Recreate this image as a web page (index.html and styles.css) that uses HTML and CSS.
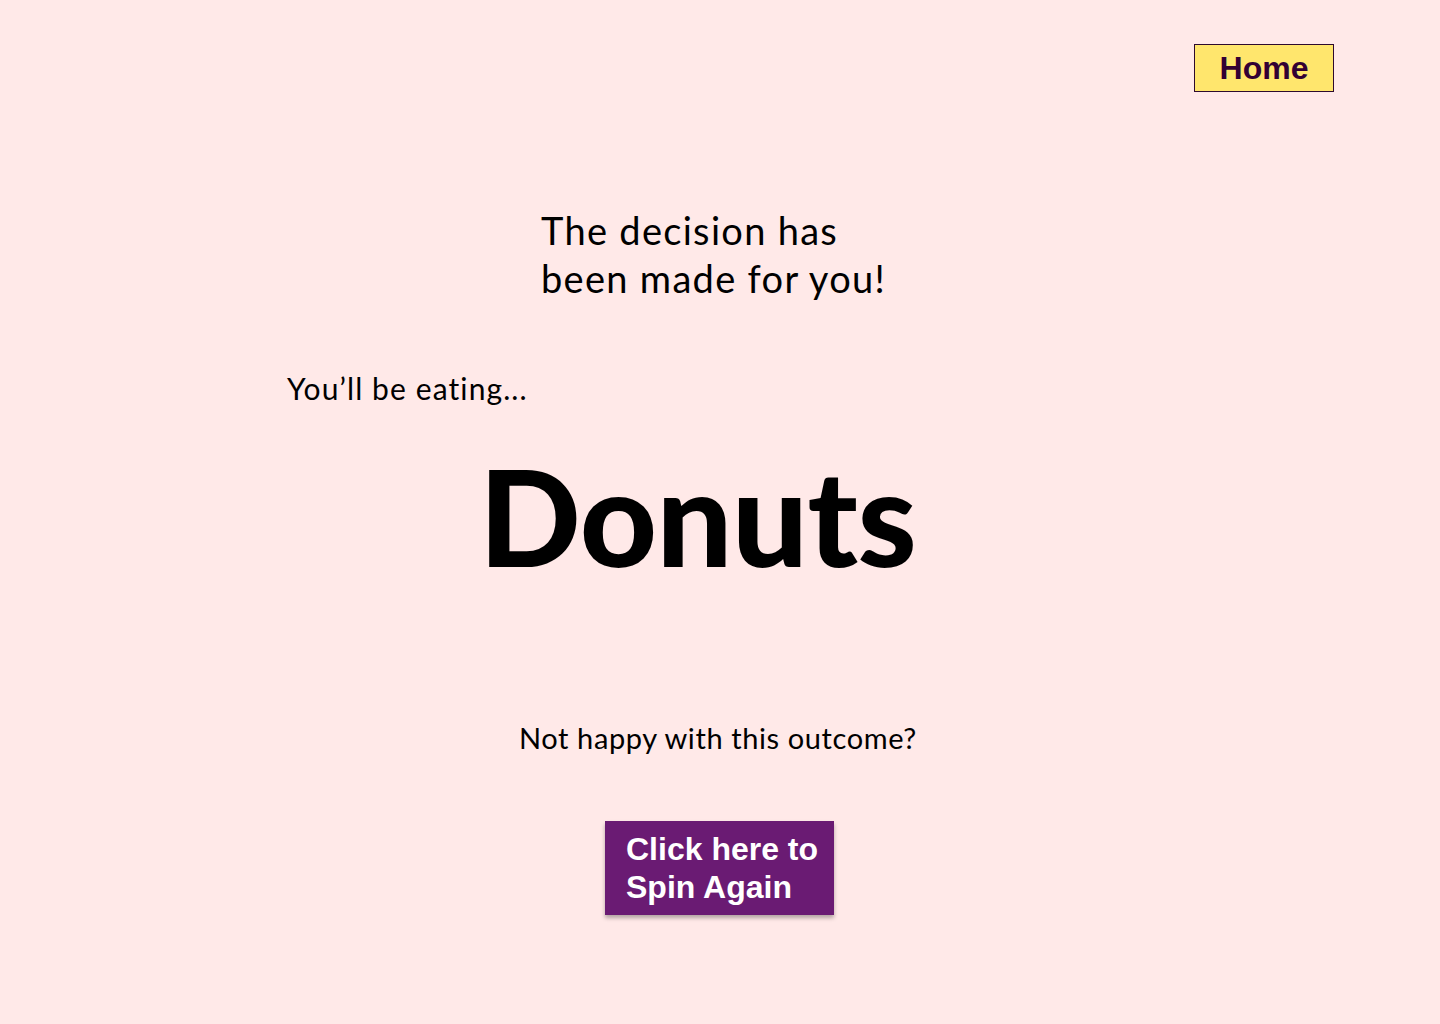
FILE: index.html
```html
<!DOCTYPE html>
<html lang="en">
<head>
<meta charset="utf-8">
<title>Decision</title>
<link rel="stylesheet" href="styles.css">
</head>
<body>
<header class="topbar">
  <a class="home-btn" href="#">Home</a>
</header>
<main class="result">
  <h1 class="decision">The decision has<br>been made for you!</h1>
  <p class="eating">You’ll be eating...</p>
  <h2 class="food">Donuts</h2>
  <p class="unhappy">Not happy with this outcome?</p>
  <a class="spin-btn" href="#">Click here to<br>Spin Again</a>
</main>
</body>
</html>
```
FILE: styles.css
```css
html, body {
  margin: 0;
  padding: 0;
}
body {
  background: #ffe9e8;
  width: 1440px;
  height: 1024px;
  overflow: hidden;
  font-family: "Lato", "Noto Sans", sans-serif;
  color: #000;
}
.topbar {
  display: flex;
  justify-content: flex-end;
  padding: 44px 106px 0 0;
}
.home-btn {
  display: flex;
  align-items: center;
  justify-content: center;
  width: 138px;
  height: 46px;
  background: #ffe66d;
  border: 1px solid #2d0a2e;
  color: #330033;
  font-family: "Liberation Sans", Arial, sans-serif;
  font-weight: bold;
  font-size: 32px;
  text-decoration: none;
}
.result {
  display: flex;
  flex-direction: column;
}
.decision {
  margin: 114px 0 0 541px;
  font-weight: 400;
  font-size: 38px;
  line-height: 48px;
  letter-spacing: 1.3px;
}
.eating {
  margin: 68px 0 0 287px;
  font-size: 30px;
  line-height: 36px;
  letter-spacing: 1.1px;
}
.food {
  margin: 40px 0 0 479px;
  font-family: "Lato", sans-serif;
  font-weight: 900;
  font-size: 134px;
  line-height: 140px;
  letter-spacing: -0.5px;
}
.unhappy {
  margin: 134px 0 0 519px;
  font-size: 29px;
  line-height: 36px;
  letter-spacing: 0.6px;
}
.spin-btn {
  align-self: flex-start;
  margin: 65px 0 0 605px;
  box-sizing: border-box;
  width: 229px;
  height: 94px;
  padding: 9px 0 0 21px;
  background: #6a1b73;
  color: #fff;
  font-family: "Liberation Sans", Arial, sans-serif;
  font-weight: bold;
  font-size: 32px;
  line-height: 38px;
  text-decoration: none;
  box-shadow: 0 3px 4px rgba(0,0,0,0.3);
}
```
